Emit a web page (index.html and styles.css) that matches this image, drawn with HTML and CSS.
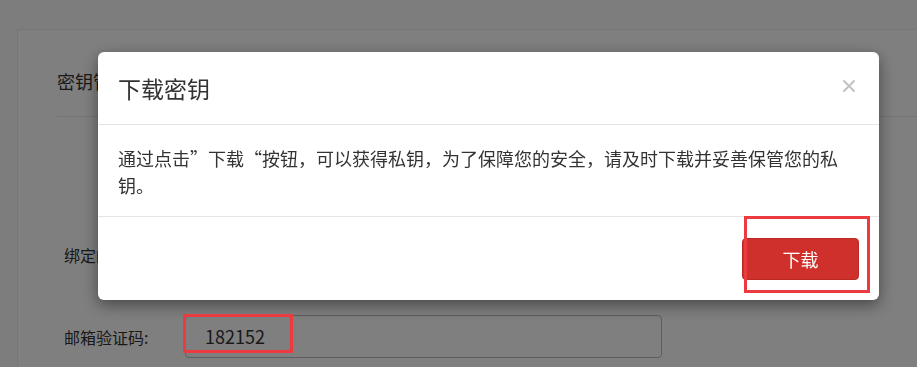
FILE: index.html
```html
<!DOCTYPE html>
<html lang="zh-CN">
<head>
  <meta charset="UTF-8" />
  <meta name="viewport" content="width=device-width, initial-scale=1.0"/>
  <title>下载密钥</title>
  <link rel="stylesheet" href="styles.css">
</head>
<body>
  <div class="card">
    <div class="card-title">密钥管理</div>
    <div class="form">
      <div class="form-row">
        <label class="form-label">绑定邮箱:</label>
        <div class="form-input">example@mail.com</div>
      </div>
      <div class="form-row">
        <label class="form-label">邮箱验证码:</label>
        <div class="form-input">182152</div>
      </div>
    </div>
  </div>

  <div class="mask"></div>

  <div class="modal">
    <div class="modal-header">
      <h4 class="modal-title">下载密钥</h4>
      <button class="modal-close" aria-label="关闭">
        <svg width="14" height="14" viewBox="0 0 14 14">
          <path d="M2 2 L12 12 M12 2 L2 12" stroke="#c2c2c2" stroke-width="2" stroke-linecap="round"/>
        </svg>
      </button>
    </div>
    <div class="modal-body">通过点击”下载“按钮，可以获得私钥，为了保障您的安全，请及时下载并妥善保管您的私钥。</div>
    <div class="modal-footer">
      <button class="btn-download">下载</button>
    </div>
  </div>

  <!-- annotation marks -->
  <div class="mark mark-code"></div>
  <div class="mark mark-btn"></div>
</body>
</html>
```

FILE: styles.css
```css
body, html {
  margin: 0;
  padding: 0;
  height: 100%;
  overflow: hidden;
  font-family: "Microsoft YaHei", "Noto Sans CJK SC", "Noto Sans", sans-serif;
  color: #333;
  background: #fbfbfb;
}

.card {
  margin: 29px 0 0 17px;
  height: calc(100% - 29px);
  background: #fff;
  border-top: 1px solid #ececec;
  border-left: 1px solid #ececec;
  padding: 38px 0 0 39px;
  box-sizing: border-box;
  overflow: hidden;
}

.card-title {
  font-size: 18px;
  line-height: 27px;
  padding-bottom: 21px;
  border-bottom: 1px solid #e8e8e8;
}

.form {
  padding: 116px 0 0 7px;
  display: flex;
  flex-direction: column;
  gap: 39px;
}

.form-row {
  display: flex;
  align-items: center;
}

.form-label {
  width: 121px;
  font-size: 16px;
  line-height: 24px;
}

.form-input {
  width: 477px;
  height: 43px;
  box-sizing: border-box;
  border: 1px solid #bdbdbd;
  border-radius: 4px;
  padding: 0 19px;
  font-size: 18px;
  line-height: 41px;
  color: #333;
}

.mask {
  position: fixed;
  inset: 0;
  background: rgba(0, 0, 0, 0.5);
}

.modal {
  position: fixed;
  left: 98px;
  top: 52px;
  width: 781px;
  background: #fff;
  border-radius: 6px;
  box-shadow: 0 5px 16px rgba(0, 0, 0, 0.45);
}

.modal-header {
  display: flex;
  align-items: center;
  justify-content: space-between;
  padding: 20px 20px 19px 20px;
  border-bottom: 1px solid #e5e5e5;
}

.modal-title {
  margin: 0;
  font-size: 23px;
  font-weight: normal;
  line-height: 33px;
  color: #333;
}

.modal-close {
  border: none;
  background: none;
  padding: 0;
  margin: -6px 3px 0 0;
  width: 14px;
  height: 14px;
  cursor: pointer;
}

.modal-close svg {
  display: block;
}

.modal-body {
  padding: 20px 20px 17px 20px;
  font-size: 18px;
  line-height: 27px;
  color: #333;
}

.modal-footer {
  display: flex;
  justify-content: flex-end;
  padding: 21px 20px 20px 20px;
  border-top: 1px solid #e5e5e5;
}

.btn-download {
  width: 117px;
  height: 42px;
  border: 1px solid #b92a25;
  border-radius: 4px;
  background: #cf302b;
  color: #fff;
  font-family: inherit;
  font-size: 18px;
  cursor: pointer;
}

.mark {
  position: fixed;
  border: 3px solid #ec3b40;
  box-sizing: border-box;
}

.mark-code {
  left: 183px;
  top: 314px;
  width: 110px;
  height: 39px;
}

.mark-btn {
  left: 744px;
  top: 216px;
  width: 126px;
  height: 77px;
}
```
